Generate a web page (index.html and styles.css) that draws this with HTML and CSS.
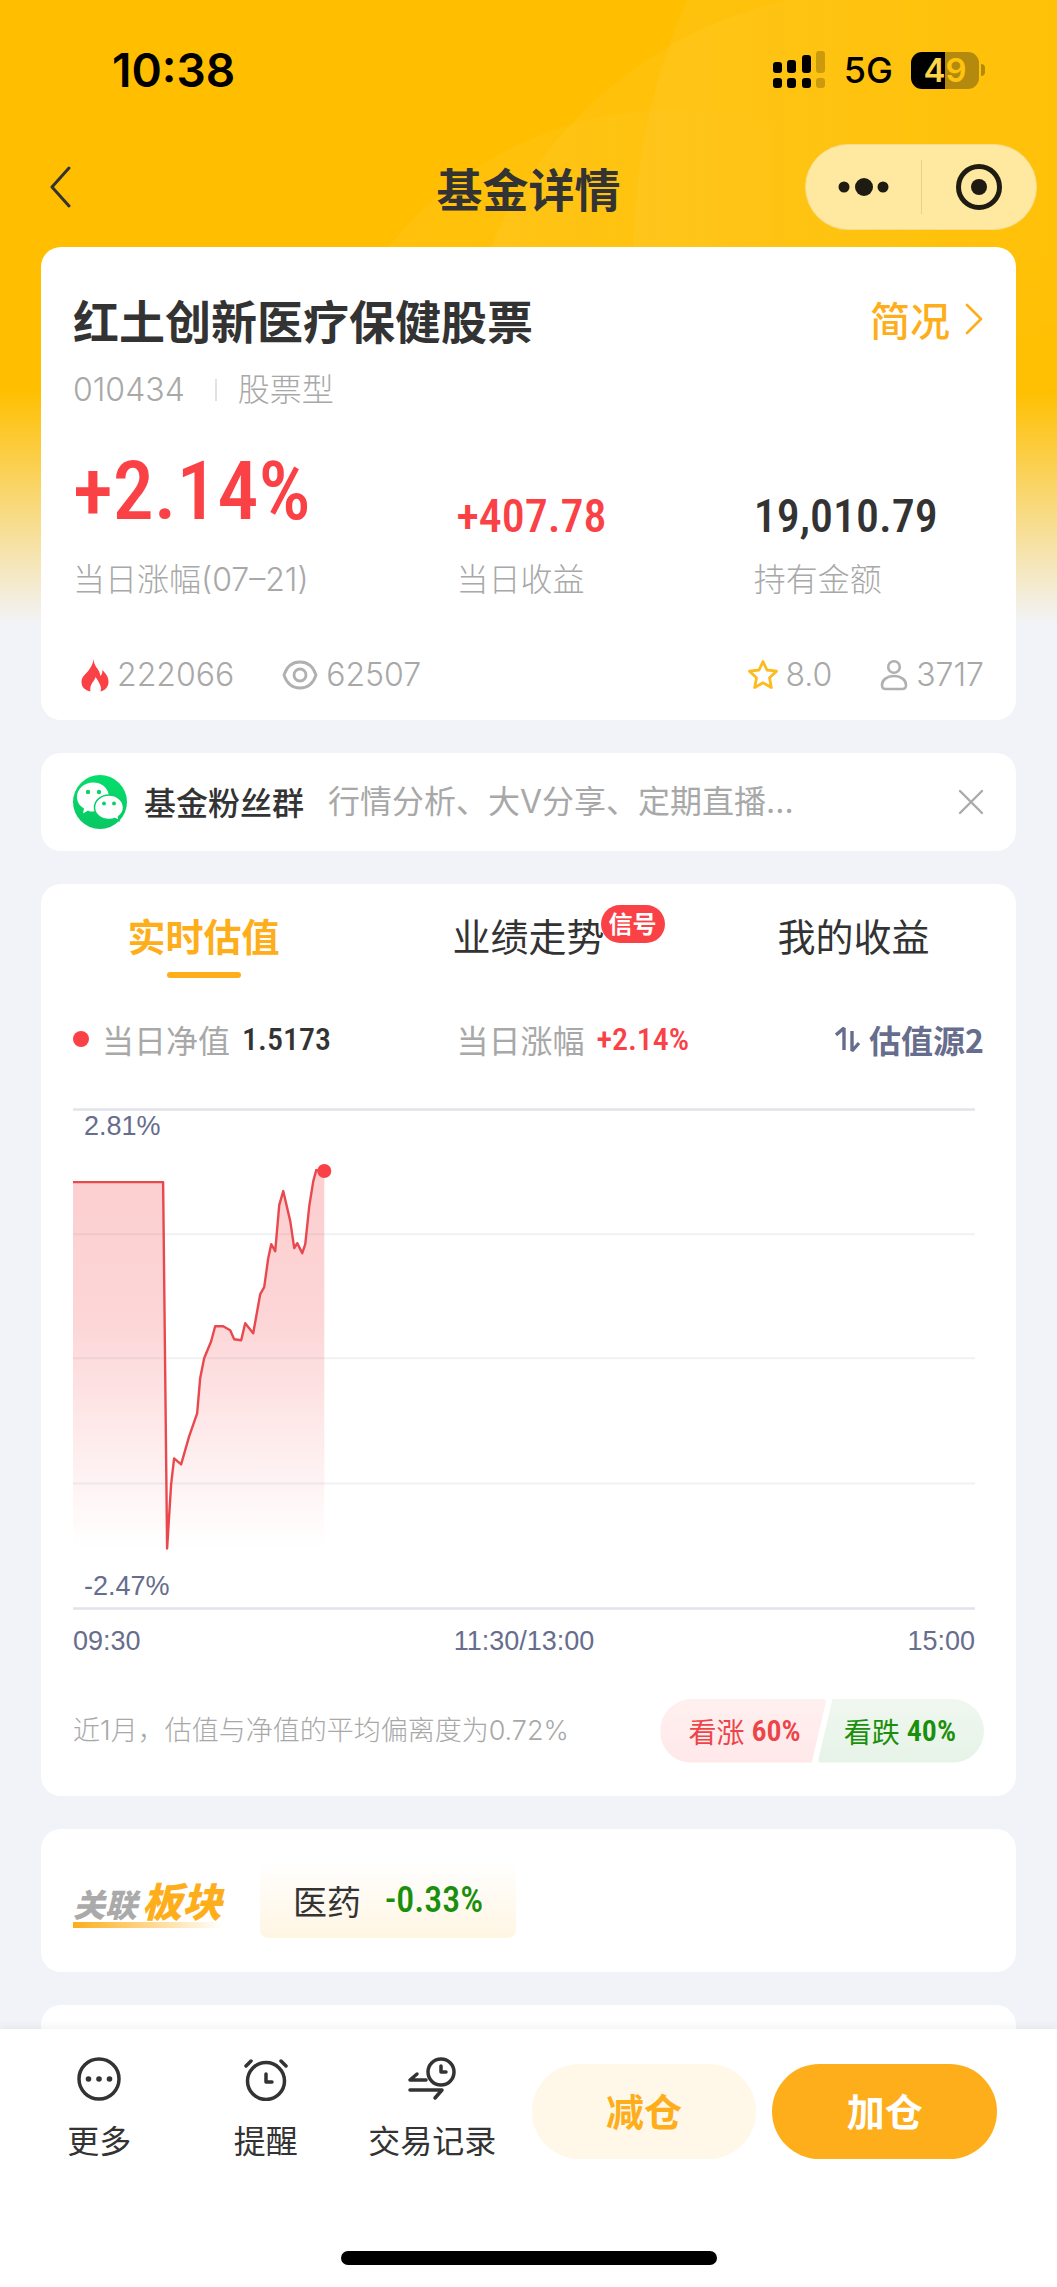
FILE: index.html
```html
<!DOCTYPE html>
<html lang="zh-CN">
<head>
<meta charset="utf-8">
<meta name="viewport" content="width=device-width, initial-scale=1">
<title>基金详情</title>
<link rel="stylesheet" href="styles.css">
</head>
<body>
<div class="page">
  <svg class="backdrop" viewBox="0 0 1057 420" preserveAspectRatio="xMaxYMin slice" aria-hidden="true">
    <defs>
      <linearGradient id="glow" x1="0" y1="0" x2="1" y2="0">
        <stop offset="0" stop-color="#fff" stop-opacity=".05"/>
        <stop offset=".4" stop-color="#fff" stop-opacity=".03"/>
        <stop offset=".65" stop-color="#fff" stop-opacity="0"/>
      </linearGradient>
    </defs>
    <circle cx="1250" cy="250" r="616" fill="url(#glow)"/>
    <circle cx="880" cy="413" r="423" fill="url(#glow)"/>
    <circle cx="674" cy="476" r="366" fill="url(#glow)"/>
  </svg>

  <header class="top">
    <div class="status">
      <span class="clock">10:38</span>
      <div class="status-right">
        <svg class="signal" viewBox="0 0 54 38" width="54" height="38" aria-hidden="true">
          <rect x="1" y="11" width="9" height="11" rx="3"/><rect x="15" y="9" width="9" height="13" rx="3"/><rect x="30" y="4" width="9" height="18" rx="3"/>
          <rect x="1" y="27" width="9" height="10" rx="3"/><rect x="15" y="27" width="9" height="10" rx="3"/><rect x="30" y="27" width="9" height="10" rx="3"/>
          <g opacity=".2"><rect x="44" y="0" width="9" height="22" rx="3"/><rect x="44" y="27" width="9" height="10" rx="3"/></g>
        </svg>
        <span class="network">5G</span>
        <div class="battery"><span class="battery-level"><b>4</b><i>9</i></span><span class="battery-tip"></span></div>
      </div>
    </div>
    <nav class="navbar">
      <button class="back" aria-label="返回">
        <svg viewBox="0 0 22 42" width="22" height="42"><path d="M20 2 3 21l17 19" fill="none" stroke="#333" stroke-width="3" stroke-linecap="round" stroke-linejoin="round"/></svg>
      </button>
      <h1>基金详情</h1>
      <div class="capsule">
        <button aria-label="菜单"><svg viewBox="0 0 52 20" width="52" height="20" fill="#1e1b12"><circle cx="6" cy="10" r="5.5"/><circle cx="26" cy="10" r="9"/><circle cx="45" cy="10" r="5.5"/></svg></button>
        <button aria-label="关闭"><svg viewBox="0 0 48 48" width="48" height="48"><circle cx="24" cy="24" r="20.5" fill="none" stroke="#1e1b12" stroke-width="5"/><circle cx="24" cy="24" r="8" fill="#1e1b12"/></svg></button>
      </div>
    </nav>
  </header>

  <main class="content">
    <section class="card fund">
      <div class="fund-head">
        <h2>红土创新医疗保健股票</h2>
        <a class="brief" href="#brief">简况<svg viewBox="0 0 20 34" width="20" height="34" aria-hidden="true"><path d="M3 3l14 14L3 31" fill="none" stroke="#fdae1a" stroke-width="2.6" stroke-linecap="round" stroke-linejoin="round"/></svg></a>
      </div>
      <div class="fund-meta"><span>010434</span><span class="rule"></span><span>股票型</span></div>
      <dl class="metrics">
        <div><dd class="rise big">+2.14%</dd><dt>当日涨幅(07–21)</dt></div>
        <div><dd class="rise">+407.78</dd><dt>当日收益</dt></div>
        <div><dd>19,010.79</dd><dt>持有金额</dt></div>
      </dl>
      <div class="stats">
        <span class="stat"><svg viewBox="0 0 28 33" width="28" height="33" aria-hidden="true"><path d="M12.500 0c.5 6 3 8 4.500 10.500 1.300 2 2 4 2.300 6.500 1.700-1.500 2.200-3.500 2-6 3.500 3.500 6.500 7 6.200 12.500-.3 4.500-3.500 8-8 9 1.500-4-.5-8-5-14.500-1 4.500-6.500 7.500-5 14.500C4 31.500.500 28 .500 23c0-5.500 4-7.500 7-11.500C10 8 12 5 12.500 0z" fill="#fa4146"/></svg>222066</span>
        <span class="stat"><svg viewBox="0 0 36 30" width="36" height="30" fill="none" stroke="#b0b0b0" stroke-width="2.800" aria-hidden="true"><path d="M2 15C5 6 11 2 18 2s13 4 16 13c-3 9-9 13-16 13S5 24 2 15z"/><circle cx="18" cy="15" r="6"/></svg>62507</span>
        <span class="stat push"><svg viewBox="0 0 32 32" width="32" height="32" aria-hidden="true"><path d="M16 2.500l4 8.500 9.500 1.200-7 6.600 1.800 9.700-8.300-4.700-8.300 4.700 1.800-9.700-7-6.600L12 11z" fill="none" stroke="#fdbb20" stroke-width="2.800" stroke-linejoin="round"/></svg>8.0</span>
        <span class="stat person"><svg viewBox="0 0 28 32" width="28" height="32" fill="none" stroke="#b0b0b0" stroke-width="2.600" aria-hidden="true"><circle cx="14" cy="8" r="5.800"/><path d="M14 17c7 0 12 4 12 9 0 3-1 4-4 4H6c-3 0-4-1-4-4 0-5 5-9 12-9z"/></svg>3717</span>
      </div>
    </section>

    <section class="card group">
      <svg class="wechat" viewBox="0 0 54 54" width="54" height="54" aria-hidden="true">
        <defs><linearGradient id="green" x1="0" y1="0" x2="0" y2="1"><stop offset="0" stop-color="#04de6b"/><stop offset="1" stop-color="#0ac763"/></linearGradient></defs>
        <circle cx="27" cy="27" r="27" fill="url(#green)"/>
        <path d="M20 7.500c9 0 16 6 16 14.500s-7 14.500-16 14.500c-2 0-4 0-5-1l-5 3 1-5c-5-3-7-7-7-11.500 0-8 7-14.500 16-14.500z" fill="#fff"/>
        <circle cx="15" cy="17" r="2.200" fill="#08d467"/><circle cx="26" cy="17" r="2.200" fill="#08d467"/>
        <path d="M36 20c8 0 14.500 5.500 14.500 12.500 0 4-2 7-5 9l.5 4-4-2c-2 .8-4 1-6 1-8 0-14.500-5-14.500-12S28 20 36 20z" fill="#fff" stroke="#08d067" stroke-width="1.500"/>
        <circle cx="31" cy="28.500" r="1.900" fill="#08d067"/><circle cx="41" cy="28.500" r="1.900" fill="#08d067"/>
      </svg>
      <strong>基金粉丝群</strong>
      <span class="group-text">行情分析、大V分享、定期直播…</span>
      <button class="close" aria-label="关闭"><svg viewBox="0 0 26 26" width="26" height="26"><path d="M2 2l22 22M24 2L2 24" stroke="#aaa" stroke-width="2.400" stroke-linecap="round"/></svg></button>
    </section>

    <section class="card valuation">
      <div class="tabs" role="tablist">
        <button role="tab" aria-selected="true" class="tab active">实时估值</button>
        <button role="tab" aria-selected="false" class="tab"><span class="tab-label">业绩走势<span class="badge">信号</span></span></button>
        <button role="tab" aria-selected="false" class="tab">我的收益</button>
      </div>
      <div class="legend">
        <span class="legend-item"><span class="dot"></span>当日净值<b>1.5173</b></span>
        <span class="legend-item">当日涨幅<b class="rise">+2.14%</b></span>
        <button class="source"><svg viewBox="0 0 26 32" width="26" height="32" fill="none" stroke="#676d8c" stroke-width="3.400" aria-hidden="true"><path d="M1 12l8-7v22M17 8v20l7-8" stroke-linejoin="bevel"/></svg>估值源2</button>
      </div>
      <div class="chart">
        <svg class="plot" viewBox="0 0 901 502" role="img" aria-label="当日估值走势">
          <defs><linearGradient id="area" gradientUnits="userSpaceOnUse" x1="0" y1="62" x2="0" y2="440"><stop offset="0" stop-color="#f44b50" stop-opacity=".27"/><stop offset=".4" stop-color="#f44b50" stop-opacity=".23"/><stop offset="1" stop-color="#f44b50" stop-opacity="0"/></linearGradient></defs>
          <g stroke="#f0f1f4" stroke-width="2"><path d="M0 126h901M0 250h901M0 375h901"/></g>
          <g stroke="#e2e4ea" stroke-width="2.500"><path d="M0 1.500h901M0 500h901"/></g>
          <path fill="url(#area)" d="M0 74H90L94 440 98 376 101 350 108 356 116 328 124 305 127 270 131 250 138 233 142 218H150L157 222 161 231 168 232 172 215 180 225 187 186 191 179 195 150 198 136 202 143 206 97 210 83 217 113 221 140 224 135 229 145 232 136 236 98 240 73 243 62 251 63V440H0z"/>
          <path fill="none" stroke="#e9494e" stroke-width="2.400" stroke-linejoin="round" d="M0 74H90L94 440 98 376 101 350 108 356 116 328 124 305 127 270 131 250 138 233 142 218H150L157 222 161 231 168 232 172 215 180 225 187 186 191 179 195 150 198 136 202 143 206 97 210 83 217 113 221 140 224 135 229 145 232 136 236 98 240 73 243 62 251 63"/>
          <circle cx="251" cy="63" r="7" fill="#fa4146"/>
          <g class="plot-text"><text x="11" y="27">2.81%</text><text x="11" y="486">-2.47%</text></g>
        </svg>
        <div class="axis"><span>09:30</span><span>11:30/13:00</span><span>15:00</span></div>
      </div>
      <div class="forecast">
        <p>近1月，估值与净值的平均偏离度为0.72%</p>
        <div class="votes">
          <button class="vote up">看涨<b>60%</b></button>
          <button class="vote down">看跌<b>40%</b></button>
        </div>
      </div>
    </section>

    <section class="card sector">
      <h3><span>关联</span><em>板块</em></h3>
      <a class="chip" href="#sector">医药<b>-0.33%</b></a>
    </section>

    <section class="card next"></section>
  </main>

  <footer class="bar">
    <div class="actions">
      <button class="action"><svg viewBox="0 0 44 44" width="44" height="44" aria-hidden="true"><circle cx="22" cy="22" r="20" fill="none" stroke="#333" stroke-width="3.500"/><g fill="#333"><circle cx="11.500" cy="22" r="2.800"/><circle cx="22" cy="22" r="2.800"/><circle cx="32.500" cy="22" r="2.800"/></g></svg>更多</button>
      <button class="action"><svg viewBox="0 0 44 44" width="44" height="44" fill="none" stroke="#333" stroke-width="3.500" stroke-linecap="round" stroke-linejoin="round" aria-hidden="true"><circle cx="22" cy="24" r="18.500"/><path d="M22 17v8h6M2 9l5-5M37 4l5 5"/></svg>提醒</button>
      <button class="action"><svg viewBox="0 0 48 44" width="48" height="44" fill="none" stroke="#333" stroke-width="3.500" stroke-linecap="round" stroke-linejoin="round" aria-hidden="true"><circle cx="33" cy="15" r="13"/><path d="M33 9v6h5M18 23H2l7-6M2 33h32l-7 8"/></svg>交易记录</button>
      <button class="trade sell">减仓</button>
      <button class="trade buy">加仓</button>
    </div>
    <div class="home"></div>
  </footer>
</div>
</body>
</html>
```
FILE: styles.css
```css
* { box-sizing: border-box; margin: 0; padding: 0; }

:root {
  --cjk: "Noto Sans CJK SC", sans-serif;
  --num: "Roboto Condensed", Roboto, sans-serif;
  --ui: Inter, "Noto Sans CJK SC", sans-serif;
  --ink: #333;
  --muted: #a8a8a8;
  --orange: #fdae1a;
  --red: #fa4146;
  --green: #1a8f0c;
  --slate: #676d8c;
}

body { font-family: var(--cjk); color: var(--ink); background: #f2f3f8; }
button { border: 0; background: none; font: inherit; color: inherit; cursor: pointer; }
a { color: inherit; text-decoration: none; }
svg { display: block; flex: none; }

.page {
  position: relative;
  min-height: 100vh;
  display: flex;
  flex-direction: column;
  background: linear-gradient(#ffbf00 0, #ffbf00 390px, #f2f3f8 624px);
}
.backdrop { position: absolute; top: 0; left: 0; width: 100%; height: 420px;
  -webkit-mask-image: linear-gradient(#000 60%, transparent); mask-image: linear-gradient(#000 60%, transparent); }
.top, .content { position: relative; }

/* status bar */
.status { height: 140px; padding: 0 72px 0 112px; display: flex; align-items: center; justify-content: space-between; color: #000; }
.clock { font: 600 46px/60px var(--ui); }
.status-right { display: flex; align-items: center; gap: 18px; }
.network { font: 500 36px/40px var(--ui); }
.battery { display: flex; align-items: center; gap: 2px; }
.battery-level { width: 68px; height: 37px; border-radius: 11px; display: flex; align-items: center; justify-content: center;
  background: linear-gradient(90deg, #000 50%, #b38a0d 50%); font: 600 33px/37px var(--ui); }
.battery-level b { color: #ffd34a; font-weight: inherit; }
.battery-level i { color: #ffc30d; font-style: normal; }
.battery-tip { width: 4px; height: 12px; border-radius: 0 4px 4px 0; background: #b38a0d; }

/* title bar */
.navbar { height: 94px; margin-bottom: 13px; padding: 0 20px; display: grid; grid-template-columns: 1fr auto 1fr; align-items: center; }
.navbar h1 { font-size: 46px; line-height: 60px; font-weight: 700; }
.back { justify-self: start; padding-left: 29px; }
.capsule { justify-self: end; width: 232px; height: 86px; border-radius: 43px; background: #ffe8a0; border: 1px solid #f5dc8c; display: grid; grid-template-columns: 1fr 1fr; align-items: center; }
.capsule button { display: flex; justify-content: center; align-items: center; height: 54px; }
.capsule button + button { border-left: 1px solid #e6d190; }

/* cards */
.content { flex: 1; padding: 0 41px; display: flex; flex-direction: column; gap: 33px; }
.card { background: #fff; border-radius: 20px; padding: 0 32px; }

.fund { padding-top: 41px; padding-bottom: 25px; }
.fund-head { display: flex; justify-content: space-between; align-items: center; height: 62px; }
.fund-head h2 { font-size: 46px; line-height: 62px; font-weight: 700; }
.brief { display: flex; align-items: center; gap: 14px; font-size: 40px; line-height: 60px; font-weight: 500; color: var(--orange); }
.fund-meta { margin-top: 20px; display: flex; align-items: center; font: 300 32px/40px var(--ui); color: var(--muted); }
.fund-meta .rule { width: 2px; height: 22px; background: #e2e2e2; margin: 0 21px 0 30px; }
.metrics { margin-top: 41px; display: grid; grid-template-columns: 383fr 297fr 230fr; }
.metrics div { display: flex; flex-direction: column; justify-content: flex-end; }
.metrics dd { font: 500 46px/46px var(--num); margin-bottom: 21px; }
.metrics dd.big { font-size: 82px; line-height: 80px; margin-bottom: 29px; }
.metrics dt { font: 300 32px/40px var(--ui); color: var(--muted); }
.rise { color: var(--red); }
.stats { margin-top: 55px; display: flex; align-items: center; font: 300 32px/40px var(--ui); color: var(--muted); }
.stat { display: flex; align-items: center; gap: 8px; padding-left: 8px; }
.stat + .stat { margin-left: 40px; }
.stat.push { margin-left: auto; gap: 6px; }

.group { height: 98px; display: flex; align-items: center; }
.group strong { margin: 0 24px 0 17px; padding-bottom: 3px; font-size: 32px; line-height: 40px; font-weight: 500; white-space: nowrap; }
.group-text { flex: 1; font: 400 32px/40px var(--ui); color: var(--muted); white-space: nowrap; }

/* live valuation */
.valuation { padding-bottom: 33px; }
.tabs { margin: 0 -32px; padding-top: 27px; display: grid; grid-template-columns: 1fr 1fr 1fr; }
.tab { display: flex; flex-direction: column; align-items: center; gap: 13px; height: 67px; font-size: 38px; line-height: 48px; }
.tab.active { color: var(--orange); font-weight: 700; }
.tab.active::after { content: ""; width: 74px; height: 6px; border-radius: 3px; background: var(--orange); }
.tab-label { position: relative; }
.badge { position: absolute; left: 100%; top: -6px; margin-left: -4px; padding: 0 8px; height: 38px; border-radius: 19px; background: var(--red); color: #fff; font-size: 24px; line-height: 36px; font-weight: 700; white-space: nowrap; }
.legend { margin-top: 41px; display: grid; grid-template-columns: 383fr 297fr 230fr; align-items: center; height: 40px; }
.legend-item { display: flex; align-items: center; font-size: 32px; line-height: 40px; color: var(--muted); }
.legend-item b { margin-left: 12px; font: 500 32px/40px var(--num); color: var(--ink); }
.legend-item b.rise { color: var(--red); }
.dot { width: 16px; height: 16px; border-radius: 50%; background: var(--red); margin-right: 13px; }
.source { justify-self: end; display: flex; align-items: center; gap: 8px; font-size: 32px; line-height: 40px; font-weight: 700; color: var(--slate); }
.chart { margin-top: 49px; padding-right: 9px; }
.plot { width: 100%; height: auto; }
.plot-text, .axis { font-family: "Liberation Sans", Arial, sans-serif; font-size: 27px; fill: var(--slate); color: var(--slate); }
.axis { margin-top: 14px; display: flex; justify-content: space-between; line-height: 32px; }
.forecast { margin-top: 42px; display: flex; align-items: center; justify-content: space-between; }
.forecast p { font: 300 27px/40px var(--ui); color: var(--muted); white-space: nowrap; }
.votes { display: flex; }
.vote { height: 64px; display: flex; align-items: center; gap: 7px; font-size: 28px; }
.vote b { font: 600 30px/40px var(--num); }
.vote.up { padding: 0 26px 0 28px; color: #ed4449; background: linear-gradient(#fff0f0, #ffe8e9); border-radius: 32px 4px 4px 32px; clip-path: polygon(0 0, 100% 0, calc(100% - 15px) 100%, 0 100%); }
.vote.down { margin-left: -9px; padding: 0 28px 0 26px; color: var(--green); background: linear-gradient(#f0f7f0, #e6f3e7); border-radius: 4px 32px 32px 4px; clip-path: polygon(15px 0, 100% 0, 100% 100%, 0 100%); }

.sector { height: 143px; display: flex; align-items: center; }
.sector h3 { width: 155px; display: flex; align-items: baseline; gap: 5px; padding-bottom: 2px; margin-top: 4px; font-size: 32px; line-height: 46px; font-weight: 900; font-style: italic; color: #aaa;
  background: linear-gradient(90deg, var(--orange), #fff) 0 100% / 150px 6px no-repeat; }
.sector h3 em { font-size: 40px; color: var(--orange); }
.chip { margin-left: 32px; height: 76px; padding: 0 33px; border-radius: 8px; display: flex; align-items: center; gap: 24px; font-size: 34px; background: linear-gradient(#fff, #fff5e3); }
.chip b { font: 500 36px/44px var(--num); color: var(--green); }
.next { height: 24px; border-radius: 20px 20px 0 0; }

/* bottom actions */
.bar { position: sticky; bottom: 0; padding: 28px 0 22px; background: #fff; box-shadow: 0 -2px 8px rgba(60, 60, 90, .07); }
.actions { display: flex; padding: 0 60px 0 16px; }
.action { flex: 166 1 0; display: flex; flex-direction: column; align-items: center; gap: 18px; font-size: 32px; line-height: 40px; white-space: nowrap; }
.trade { flex: 224 1 0; height: 95px; margin: 7px 0 0 16px; padding-bottom: 4px; border-radius: 48px; font-size: 38px; font-weight: 700; }
.sell { background: #fff7e8; color: var(--orange); }
.buy { background: var(--orange); color: #fff; }
.home { width: 376px; height: 14px; margin: 92px auto 0; border-radius: 7px; background: #000; }
```
